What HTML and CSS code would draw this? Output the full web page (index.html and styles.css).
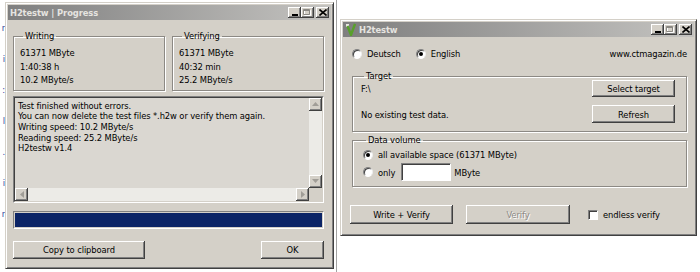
FILE: index.html
```html
<!DOCTYPE html>
<html lang="en">
  <head>
    <meta charset="UTF-8" />
    <title>H2testw</title>
    <link rel="stylesheet" href="styles.css">
  </head>
  <body>
    <div class="desk">
      <div class="web-edge">
        <div>r</div>
        <div>i</div>
        <div>:</div>
        <div>l</div>
        <div>.</div>
        <div>i</div>
        <div>r</div>
      </div>

      <div class="left-col">
        <div class="web-top"></div>
        <div class="win win-progress">
          <div class="titlebar">
            <span class="title">H2testw | Progress</span>
            <div class="caption-btns">
              <span class="cbtn"><svg width="8" height="7" viewBox="0 0 8 7"><rect x="1" y="5" width="6" height="2" fill="#000"/></svg></span>
              <span class="cbtn"><svg width="9" height="8" viewBox="0 0 9 8"><path d="M1.5 1.5h6v5h-6z" fill="none" stroke="#fff"/><path d="M0.5 0.5h6v5h-6z M0.5 1.5h6" fill="none" stroke="#8a8883"/></svg></span>
              <span class="cbtn close"><svg width="8" height="7" viewBox="0 0 8 7"><path d="M0.5 0.5l7 6M7.5 0.5l-7 6" stroke="#000" stroke-width="1.6"/></svg></span>
            </div>
          </div>

          <div class="client client-progress">
            <div class="stats">
              <fieldset class="group">
                <legend>Writing</legend>
                <div class="stat">61371 MByte</div>
                <div class="stat">1:40:38 h</div>
                <div class="stat">10.2 MByte/s</div>
              </fieldset>
              <fieldset class="group">
                <legend>Verifying</legend>
                <div class="stat">61371 MByte</div>
                <div class="stat">40:32 min</div>
                <div class="stat">25.2 MByte/s</div>
              </fieldset>
            </div>

            <div class="log">
              <div class="log-inner">
                <div class="log-text">
                  <div>Test finished without errors.</div>
                  <div>You can now delete the test files *.h2w or verify them again.</div>
                  <div>Writing speed: 10.2 MByte/s</div>
                  <div>Reading speed: 25.2 MByte/s</div>
                  <div>H2testw v1.4</div>
                </div>
                <div class="vscroll">
                  <span class="sbtn"><svg width="7" height="4" viewBox="0 0 7 4"><path d="M3.5 0L7 4H0z" fill="#a09d97"/></svg></span>
                  <span class="track"></span>
                  <span class="sbtn"><svg width="7" height="4" viewBox="0 0 7 4"><path d="M0 0h7L3.5 4z" fill="#a09d97"/></svg></span>
                </div>
                <div class="hscroll">
                  <span class="sbtn"><svg width="4" height="7" viewBox="0 0 4 7"><path d="M0 3.5L4 0v7z" fill="#a09d97"/></svg></span>
                  <span class="track"></span>
                  <span class="sbtn"><svg width="4" height="7" viewBox="0 0 4 7"><path d="M0 0l4 3.5L0 7z" fill="#a09d97"/></svg></span>
                </div>
                <div class="corner"></div>
              </div>
            </div>

            <div class="bar"><div class="bar-fill" style="width: 100%"></div></div>

            <div class="actions">
              <button class="btn btn-copy">Copy to clipboard</button>
              <button class="btn btn-ok">OK</button>
            </div>
          </div>
        </div>
      </div>

      <div class="pane-line"></div>

      <div class="win win-main">
        <div class="titlebar">
          <svg class="app-icon" width="10" height="13" viewBox="0 0 10 13">
            <rect x="0" y="1" width="3" height="3" fill="#e8e8e0"/>
            <path d="M1.5 3L5 12L9 1" fill="none" stroke="#58a02c" stroke-width="2.4"/>
          </svg>
          <span class="title">H2testw</span>
          <div class="caption-btns">
            <span class="cbtn"><svg width="8" height="7" viewBox="0 0 8 7"><rect x="1" y="5" width="6" height="2" fill="#000"/></svg></span>
            <span class="cbtn"><svg width="9" height="8" viewBox="0 0 9 8"><path d="M1.5 1.5h6v5h-6z" fill="none" stroke="#fff"/><path d="M0.5 0.5h6v5h-6z M0.5 1.5h6" fill="none" stroke="#8a8883"/></svg></span>
            <span class="cbtn close"><svg width="8" height="7" viewBox="0 0 8 7"><path d="M0.5 0.5l7 6M7.5 0.5l-7 6" stroke="#000" stroke-width="1.6"/></svg></span>
          </div>
        </div>

        <div class="client client-main">
          <div class="lang-row">
            <span class="radio"></span><span class="lang">Deutsch</span>
            <span class="radio on"></span><span class="lang">English</span>
            <span class="site">www.ctmagazin.de</span>
          </div>

          <fieldset class="group target">
            <legend>Target</legend>
            <div class="target-grid">
              <span>F:\</span>
              <button class="btn btn-select">Select target</button>
              <span>No existing test data.</span>
              <button class="btn btn-refresh">Refresh</button>
            </div>
          </fieldset>

          <fieldset class="group volume">
            <legend>Data volume</legend>
            <div class="opt opt-all"><span class="radio on"></span><span>all available space (61371 MByte)</span></div>
            <div class="opt opt-only"><span class="radio"></span><span>only</span><span class="edit"></span><span>MByte</span></div>
          </fieldset>

          <div class="run-row">
            <button class="btn btn-run">Write + Verify</button>
            <button class="btn btn-run btn-off">Verify</button>
            <span class="check"></span><span>endless verify</span>
          </div>
        </div>
      </div>
    </div>
  </body>
</html>
```

FILE: styles.css
```css
body {
  margin: 0;
  background: #fff;
  font-family: "DejaVu Sans Condensed", "Liberation Sans", sans-serif;
  font-size: 9.3px;
  letter-spacing: -0.1px;
  color: #000;
  overflow: hidden;
}
.desk {
  display: flex;
  align-items: flex-start;
  width: 700px;
  height: 272px;
}
.web-edge {
  width: 5px;
  height: 272px;
  overflow: hidden;
  color: #2b3c9e;
  line-height: 12px;
  padding-top: 22px;
  box-sizing: border-box;
  text-align: right;
}
.web-edge div {
  margin-bottom: 19px;
}
.left-col {
  display: flex;
  flex-direction: column;
  width: 329px;
}
.web-top {
  height: 2px;
}

/* classic window frame */
.win {
  background: #d4d0c8;
  border: 1px solid;
  border-color: #d4d0c8 #404040 #404040 #d4d0c8;
  box-shadow: inset 1px 1px #fff, inset -1px -1px #808080;
  padding: 2px;
  box-sizing: border-box;
  display: flex;
  flex-direction: column;
}
.win-progress {
  height: 267px;
}
.win-main {
  width: 357px;
  height: 217px;
  margin-top: 19px;
}
.titlebar {
  height: 15px;
  display: flex;
  align-items: center;
  gap: 3px;
  padding: 0 2px;
  background: linear-gradient(to right, #7f7f7f, #c4c3c0);
  color: #e6e4e0;
  font-weight: bold;
}
.title {
  flex: 1;
}
.win-main .titlebar {
  padding-left: 3px;
}
.caption-btns {
  display: flex;
}
.cbtn {
  width: 13px;
  height: 11px;
  background: #d4d0c8;
  box-shadow: inset -1px -1px #404040, inset 1px 1px #fff, inset -2px -2px #808080;
  display: grid;
  place-items: center;
}
.cbtn.close {
  margin-left: 2px;
}

.client {
  flex: 1;
  display: flex;
  flex-direction: column;
}
.client-progress {
  padding: 10px 7px 0 5px;
}
.client-main {
  padding: 10px 7px 0 9px;
}

/* group boxes */
.group {
  margin: 0;
  min-width: 0;
  border: 1px solid #8c8984;
  box-shadow: 1px 1px #fff, inset 1px 1px #fff;
  padding: 4px 6px 3px;
}
.group legend {
  padding: 0 2px;
  margin-left: 3px;
  line-height: 12px;
}
.stats {
  display: grid;
  grid-template-columns: 1fr 1fr;
  column-gap: 7px;
}
.stat {
  line-height: 13.5px;
}

/* log box */
.log {
  margin-top: 5px;
  height: 107px;
  box-sizing: border-box;
  border: 1px solid;
  border-color: #808080 #fff #fff #808080;
}
.log-inner {
  height: 100%;
  box-sizing: border-box;
  border: 1px solid;
  border-color: #404040 #d4d0c8 #d4d0c8 #404040;
  display: grid;
  grid-template-columns: 1fr 13px;
  grid-template-rows: 1fr 13px;
}
.log-text {
  background: #dad7d1;
  padding: 3px 3px;
  line-height: 10.7px;
  white-space: nowrap;
  overflow: hidden;
}
.vscroll,
.hscroll {
  display: flex;
  background: #ecebe7;
}
.vscroll {
  flex-direction: column;
}
.track {
  flex: 1;
}
.sbtn {
  width: 13px;
  height: 13px;
  flex: none;
  box-sizing: border-box;
  background: #d4d0c8;
  box-shadow: inset -1px -1px #404040, inset 1px 1px #fff, inset -2px -2px #808080;
  display: grid;
  place-items: center;
}
.corner {
  background: #d4d0c8;
}

/* progress */
.bar {
  margin-top: 8px;
  height: 18px;
  box-sizing: border-box;
  border: 1px solid;
  border-color: #808080 #fff #fff #808080;
  padding: 1px;
}
.bar-fill {
  height: 100%;
  background: #0b2466;
}

/* buttons */
.btn {
  font: inherit;
  letter-spacing: inherit;
  color: #000;
  background: #d4d0c8;
  border: none;
  padding: 0;
  height: 18px;
  box-shadow: inset -1px -1px #404040, inset 1px 1px #fff, inset -2px -2px #808080;
}
.actions {
  margin-top: 12px;
  display: flex;
  justify-content: space-between;
}
.btn-copy {
  width: 132px;
}
.btn-ok {
  width: 63px;
}

/* main window */
.lang-row {
  display: flex;
  align-items: center;
  height: 13px;
}
.radio {
  width: 10px;
  height: 10px;
  box-sizing: border-box;
  border-radius: 50%;
  background: #fff;
  border: 1px solid;
  border-color: #808080 #eee #fff #808080;
  box-shadow: inset 1px 1px #404040;
  display: grid;
  place-items: center;
  flex: none;
}
.radio.on::after {
  content: "";
  width: 4px;
  height: 4px;
  border-radius: 50%;
  background: #000;
}
.lang {
  margin-left: 5px;
  margin-right: 15px;
}
.site {
  margin-left: auto;
}
.target {
  margin-top: 10px;
  padding: 0 11px 8px 8px;
}
.target-grid {
  margin-top: -2px;
  display: grid;
  grid-template-columns: 1fr 83px;
  grid-template-rows: 17px 18px;
  row-gap: 8px;
  align-items: center;
}
.target-grid .btn {
  height: 100%;
}
.volume {
  margin-top: 2px;
  padding: 2px 10px 5px;
}
.opt {
  display: flex;
  align-items: center;
  gap: 5px;
}
.opt-all {
  height: 13px;
}
.opt-only {
  margin-top: 2px;
  height: 18px;
}
.edit {
  width: 50px;
  height: 18px;
  box-sizing: border-box;
  background: #fff;
  border: 1px solid;
  border-color: #808080 #fff #fff #808080;
  box-shadow: inset 1px 1px #404040;
  margin-left: 1px;
  margin-right: -2px;
}
.run-row {
  margin-top: 18px;
  display: flex;
  align-items: center;
}
.btn-run {
  width: 103px;
  height: 19px;
}
.btn-run:first-child {
  margin-left: -2px;
  margin-right: 13px;
}
.btn-off {
  width: 104px;
  color: #8d8a85;
  text-shadow: 1px 1px #fff;
}
.check {
  width: 10px;
  height: 10px;
  box-sizing: border-box;
  background: #fff;
  border: 1px solid;
  border-color: #808080 #fff #fff #808080;
  box-shadow: inset 1px 1px #404040;
  margin-left: 18px;
  margin-right: 5px;
}
.pane-line {
  width: 1px;
  height: 272px;
  margin: 0 3px 0 2px;
  background: #a3a3a3;
}
```
